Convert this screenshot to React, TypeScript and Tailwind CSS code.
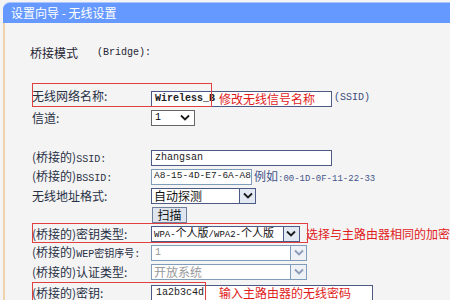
const cjk = { fontFamily: '"Noto Sans CJK SC", "Noto Sans", sans-serif' }
const mono = { fontFamily: '"Liberation Mono", "Noto Sans CJK SC", monospace' }

function Chevron({ light }: { light?: boolean }) {
    return (
        <svg width="10" height="7" viewBox="0 0 10 7" fill="none" stroke={light ? "#8a9ab8" : "#1a1a1a"} strokeWidth="1.8">
            <polyline points="1 1.5 5 5.5 9 1.5" />
        </svg>
    )
}

function Row({ label, children, className = "" }: { label: React.ReactNode; children?: React.ReactNode; className?: string }) {
    return (
        <div className={"relative flex items-center h-[19px] " + className}>
            <div className="w-[119px] shrink-0 text-[12px] leading-none text-[#283044] whitespace-nowrap" style={cjk}>
                {label}
            </div>
            {children}
        </div>
    )
}

function Bridged({ tail }: { tail: React.ReactNode }) {
    return (
        <span>
            (桥接的)<span className="text-[10px]" style={mono}>{tail}</span>
        </span>
    )
}

export default function App() {
    return (
        <div className="w-[450px] h-[300px] bg-[#f4f4f4] overflow-hidden" style={cjk}>
            <div className="ml-[3px] mt-[2px] h-[21px] bg-[#6699ff] rounded-tl-[7px] border-t border-[#a9c4ff] flex items-center pl-[8px] text-white text-[12px] whitespace-nowrap">
                设置向导 - 无线设置
            </div>
            <div className="ml-[3px] h-[277px] border-l-2 border-[#eed3ab] pl-[27px] pt-[21px]">
                <div className="flex items-center h-[17px] text-[12px] text-[#1e2433]">
                    <span className="ml-[-2px] w-[67px]">桥接模式</span>
                    <span className="text-[10px]" style={mono}>(Bridge):</span>
                </div>

                <Row label="无线网络名称:" className="mt-[24px] h-[22px]">
                    <span className="absolute left-0 top-[-2px] w-[180px] h-[24px] border border-[#e0403f]" />
                    <div className="mt-[5px] w-[181px] h-[16px] bg-white border border-[#4d5a86] flex items-center pl-[3px]">
                        <span className="text-[10px] font-bold text-[#222] w-[64px]" style={mono}>Wireless_B</span>
                        <span className="text-[12px] leading-none text-[#e01b1b] whitespace-nowrap">修改无线信号名称</span>
                    </div>
                    <span className="ml-[2px] mt-[3px] text-[10px] text-[#3c4c7c]" style={mono}>(SSID)</span>
                </Row>

                <Row label="信道:" className="mt-[1px]">
                    <div className="w-[44px] h-[16px] bg-white border border-[#666] flex items-center justify-between pl-[3px] pr-[4px]">
                        <span className="text-[10px]" style={mono}>1</span>
                        <Chevron />
                    </div>
                </Row>

                <Row label={<Bridged tail="SSID:" />} className="mt-[21px]">
                    <div className="w-[181px] h-[16px] bg-white border border-[#4d5a86] flex items-center pl-[3px]">
                        <span className="text-[10px] text-[#222]" style={mono}>zhangsan</span>
                    </div>
                </Row>

                <Row label={<Bridged tail="BSSID:" />}>
                    <div className="w-[101px] h-[16px] bg-white border border-[#7f9db9] flex items-center pl-[2px]">
                        <span className="text-[9.5px] text-[#222] whitespace-nowrap" style={mono}>A8-15-4D-E7-6A-A8</span>
                    </div>
                    <span className="ml-[2px] text-[12px] leading-none text-[#44558a] whitespace-nowrap">
                        例如<span className="text-[9px]" style={mono}>:00-1D-0F-11-22-33</span>
                    </span>
                </Row>

                <Row label="无线地址格式:">
                    <div className="w-[105px] h-[16px] bg-white border border-[#4d5a86] flex items-center">
                        <span className="flex-1 pl-[2px] text-[12px] leading-none text-[#111] whitespace-nowrap">自动探测</span>
                        <span className="w-[16px] h-full bg-[#e3e9f3] border-l border-[#4d5a86] flex items-center justify-center">
                            <Chevron />
                        </span>
                    </div>
                </Row>

                <Row label="">
                    <button className="ml-[1px] w-[35px] h-[16px] bg-[#dfe5ef] border border-[#6f7f9c] text-[12px] leading-none text-[#111] flex items-center justify-center">
                        扫描
                    </button>
                </Row>

                <Row label={<span>(桥接的)密钥类型:</span>}>
                    <span className="absolute left-0 top-[-1px] w-[276px] h-[20px] border border-[#e0403f]" />
                    <div className="w-[156px] h-[16px] bg-white border border-[#4d5a86] flex items-center">
                        <span className="flex-1 min-w-0 pl-[2px] text-[11px] leading-none text-[#111] whitespace-nowrap">
                            <span className="text-[9px]" style={mono}>WPA-</span>个人版<span className="text-[9px]" style={mono}>/WPA2-</span>个人版
                        </span>
                        <span className="w-[16px] shrink-0 h-full bg-[#e3e9f3] border-l border-[#4d5a86] flex items-center justify-center">
                            <Chevron />
                        </span>
                    </div>
                    <span className="ml-[6px] text-[12px] leading-none text-[#e01b1b] whitespace-nowrap">选择与主路由器相同的加密</span>
                </Row>

                <Row label={<Bridged tail="WEP密钥序号:" />}>
                    <div className="w-[156px] h-[16px] bg-white border border-[#7f9db9] flex items-center">
                        <span className="flex-1 pl-[3px] text-[10px] text-[#999]" style={mono}>1</span>
                        <span className="w-[16px] h-full bg-[#eef1f6] border-l border-[#7f9db9] flex items-center justify-center">
                            <Chevron light />
                        </span>
                    </div>
                </Row>

                <Row label={<span>(桥接的)认证类型:</span>}>
                    <div className="w-[156px] h-[16px] bg-white border border-[#7f9db9] flex items-center">
                        <span className="flex-1 pl-[2px] text-[12px] leading-none text-[#999] whitespace-nowrap">开放系统</span>
                        <span className="w-[16px] h-full bg-[#eef1f6] border-l border-[#7f9db9] flex items-center justify-center">
                            <Chevron light />
                        </span>
                    </div>
                </Row>

                <Row label={<span>(桥接的)密钥:</span>} className="mt-[2px]">
                    <span className="absolute left-0 top-[-1px] w-[174px] h-[21px] border border-[#e0403f]" />
                    <div className="w-[222px] h-[16px] bg-white border border-[#4d5a86] flex items-center pl-[4px]">
                        <span className="w-[63px] text-[10px] text-[#222]" style={mono}>1a2b3c4d</span>
                        <span className="text-[12px] leading-none text-[#e01b1b] whitespace-nowrap">输入主路由器的无线密码</span>
                    </div>
                </Row>
            </div>
        </div>
    )
}
